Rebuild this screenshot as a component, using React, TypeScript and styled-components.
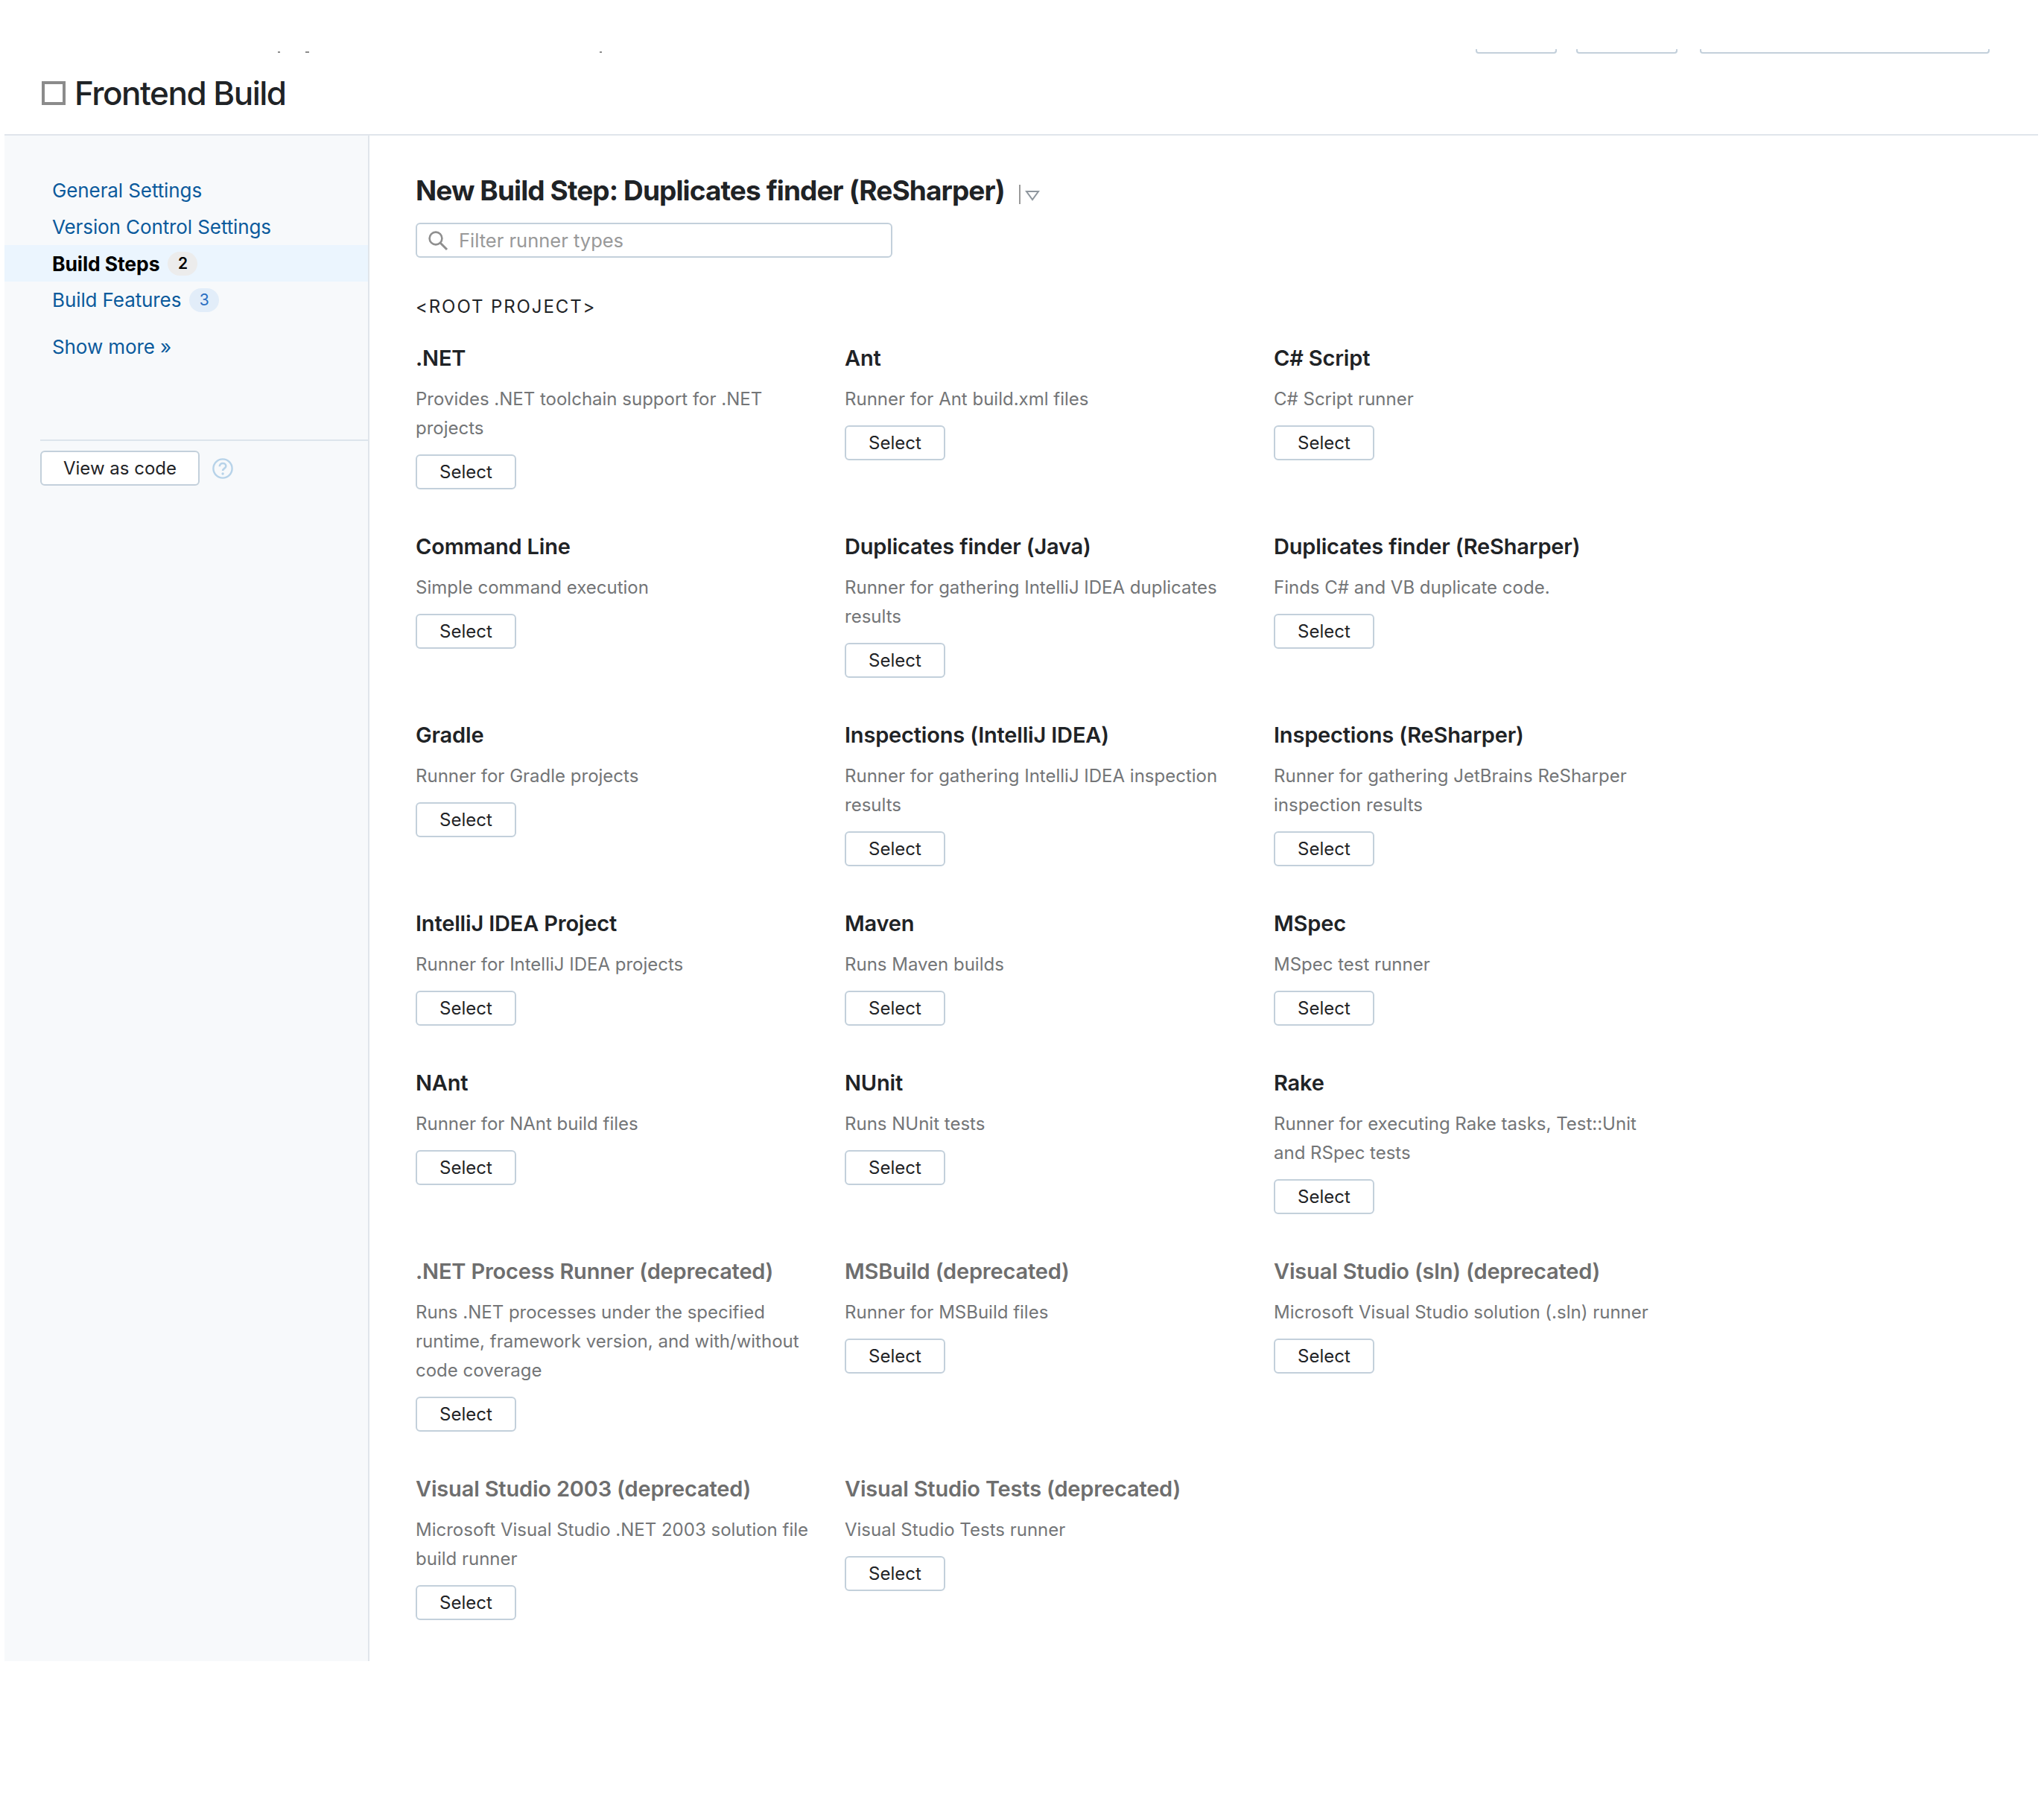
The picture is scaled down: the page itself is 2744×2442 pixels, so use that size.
import styled, { createGlobalStyle } from "styled-components";

const GlobalStyle = createGlobalStyle`
  html, body {
    margin: 0;
    background: #fff;
  }
  body {
    font-family: Inter, "Liberation Sans", sans-serif;
    color: #1f2326;
  }
  * {
    box-sizing: border-box;
  }
`;

const Page = styled.div`
  margin: 0 8px 0 6px;
`;

const Toolbar = styled.div`
  display: flex;
  align-items: flex-end;
  height: 72px;
  padding-right: 65px;
  overflow: hidden;
`;

const Crumbs = styled.div`
  display: flex;
  align-items: flex-end;
  gap: 34px;
  margin-left: 367px;
  padding-bottom: 1px;
`;

const Speck = styled.i<{ $w: number; $gap?: number }>`
  display: block;
  width: ${(p) => p.$w}px;
  height: 2px;
  margin-left: ${(p) => p.$gap ?? 0}px;
  background: #8c8c8c;
`;

const ToolbarActions = styled.div`
  display: flex;
  align-items: flex-end;
  margin-left: auto;
`;

const ClippedEdge = styled.div<{ $w: number; $gap?: number }>`
  width: ${(p) => p.$w}px;
  height: 6px;
  margin-left: ${(p) => p.$gap ?? 0}px;
  border: 2px solid #c3d0db;
  border-top: 0;
  border-radius: 0 0 4px 4px;
`;

const Header = styled.header`
  display: flex;
  align-items: center;
  gap: 12px;
  height: 110px;
  padding: 0 0 2px 50px;
  border-bottom: 2px solid #e0e5eb;
`;

const ProjectMark = styled.span`
  width: 32px;
  height: 32px;
  border: 4px solid #8b8b8b;
`;

const ProjectName = styled.h1`
  margin: 0;
  font-size: 44px;
  line-height: 56px;
  font-weight: 500;
  letter-spacing: -1.5px;
  color: #1f2326;
`;

const Body = styled.div`
  display: flex;
`;

const Sidebar = styled.aside`
  flex: 0 0 490px;
  padding-top: 49px;
  background: #f7f9fb;
  border-right: 2px solid #e0e5eb;
`;

const NavItem = styled.div<{ $active?: boolean }>`
  display: flex;
  align-items: center;
  height: 49px;
  padding-left: 64px;
  font-size: ${(p) => (p.$active ? 26.5 : 26)}px;
  font-weight: ${(p) => (p.$active ? 700 : 400)};
  letter-spacing: -0.1px;
  color: ${(p) => (p.$active ? "#000" : "#0b5a9c")};
  background: ${(p) => (p.$active ? "#ebf5fe" : "transparent")};
`;

const ShowMore = styled(NavItem)`
  margin-top: 14px;
`;

const Badge = styled.span<{ $active?: boolean }>`
  display: inline-flex;
  align-items: center;
  justify-content: center;
  width: 40px;
  height: 32px;
  margin-left: 11px;
  border-radius: 16px;
  font-size: 21px;
  font-weight: ${(p) => (p.$active ? 600 : 400)};
  color: ${(p) => (p.$active ? "#000" : "#2a6fc2")};
  background: ${(p) => (p.$active ? "#ececec" : "#e2edf9")};
`;

const SideFooter = styled.div`
  display: flex;
  align-items: center;
  gap: 17px;
  margin: 100px 0 0 48px;
  padding-top: 13px;
  border-top: 2px solid #dde5ec;
`;

const Button = styled.button<{ $w: number }>`
  width: ${(p) => p.$w}px;
  height: 47px;
  padding: 0;
  font-family: inherit;
  font-size: 24px;
  color: #1f2326;
  background: #fff;
  border: 2px solid #c3d0db;
  border-radius: 6px;
`;

const Main = styled.main`
  flex: 1;
  padding: 49px 0 55px 62px;
`;

const StepTitle = styled.div`
  display: flex;
  align-items: center;
`;

const StepHeading = styled.h2`
  margin: 0;
  font-size: 37px;
  line-height: 50px;
  font-weight: 700;
  letter-spacing: -0.9px;
  color: #1f2326;
`;

const MenuToggle = styled.svg`
  margin: 10px 0 0 19px;
`;

const Filter = styled.label`
  display: flex;
  align-items: center;
  gap: 14px;
  width: 640px;
  height: 47px;
  margin-top: 18px;
  padding-left: 14px;
  font-size: 25.5px;
  color: #999;
  background: #fff;
  border: 2px solid #c3d0db;
  border-radius: 6px;
`;

const Group = styled.div`
  margin-top: 51px;
  font-size: 24px;
  line-height: 30px;
  letter-spacing: 1.9px;
  color: #1f2326;
`;

const Runners = styled.div`
  display: grid;
  grid-template-columns: repeat(3, 576px);
  row-gap: 57px;
  margin-top: 34px;
`;

const Runner = styled.section`
  padding-right: 45px;
`;

const RunnerName = styled.h3<{ $deprecated?: boolean }>`
  margin: 0;
  font-size: 29px;
  line-height: 40px;
  font-weight: 600;
  letter-spacing: -0.18px;
  white-space: nowrap;
  color: ${(p) => (p.$deprecated ? "#6e6e6e" : "#1f2326")};
`;

const RunnerText = styled.p`
  margin: 15px 0 16px;
  font-size: 24px;
  line-height: 39px;
  color: #737577;
`;

const runners = [
  { name: ".NET", text: "Provides .NET toolchain support for .NET projects" },
  { name: "Ant", text: "Runner for Ant build.xml files" },
  { name: "C# Script", text: "C# Script runner" },
  { name: "Command Line", text: "Simple command execution" },
  { name: "Duplicates finder (Java)", text: "Runner for gathering IntelliJ IDEA duplicates results" },
  { name: "Duplicates finder (ReSharper)", text: "Finds C# and VB duplicate code." },
  { name: "Gradle", text: "Runner for Gradle projects" },
  { name: "Inspections (IntelliJ IDEA)", text: "Runner for gathering IntelliJ IDEA inspection results" },
  { name: "Inspections (ReSharper)", text: "Runner for gathering JetBrains ReSharper inspection results" },
  { name: "IntelliJ IDEA Project", text: "Runner for IntelliJ IDEA projects" },
  { name: "Maven", text: "Runs Maven builds" },
  { name: "MSpec", text: "MSpec test runner" },
  { name: "NAnt", text: "Runner for NAnt build files" },
  { name: "NUnit", text: "Runs NUnit tests" },
  { name: "Rake", text: "Runner for executing Rake tasks, Test::Unit and RSpec tests" },
  {
    name: ".NET Process Runner (deprecated)",
    text: "Runs .NET processes under the specified runtime, framework version, and with/without code coverage",
    deprecated: true,
  },
  { name: "MSBuild (deprecated)", text: "Runner for MSBuild files", deprecated: true },
  { name: "Visual Studio (sln) (deprecated)", text: "Microsoft Visual Studio solution (.sln) runner", deprecated: true },
  {
    name: "Visual Studio 2003 (deprecated)",
    text: "Microsoft Visual Studio .NET 2003 solution file build runner",
    deprecated: true,
  },
  { name: "Visual Studio Tests (deprecated)", text: "Visual Studio Tests runner", deprecated: true },
];

function SearchIcon() {
  return (
    <svg width="28" height="28" viewBox="0 0 28 28" fill="none" stroke="#8f8f8f" strokeWidth="2.6">
      <circle cx="11" cy="11" r="8.4" />
      <path d="M17 17l9 9" strokeWidth="3" />
    </svg>
  );
}

function HelpIcon() {
  return (
    <svg width="28" height="28" viewBox="0 0 28 28" fill="none" stroke="#b7d3e9" strokeWidth="2.4">
      <circle cx="14" cy="14" r="12.6" />
      <path d="M9.8 11.2c0-2.6 1.9-4.2 4.3-4.2s4.2 1.5 4.2 3.7c0 3.2-4.2 3.2-4.2 6.3" strokeWidth="2.6" />
      <circle cx="14.1" cy="21" r="1.7" fill="#b7d3e9" stroke="none" />
    </svg>
  );
}

export default function App() {
  return (
    <Page>
      <GlobalStyle />
      <Toolbar>
        <Crumbs>
          <Speck $w={3} />
          <Speck $w={5} />
          <Speck $w={3} $gap={356} />
        </Crumbs>
        <ToolbarActions>
          <ClippedEdge $w={109} />
          <ClippedEdge $w={136} $gap={26} />
          <ClippedEdge $w={389} $gap={30} />
        </ToolbarActions>
      </Toolbar>
      <Header>
        <ProjectMark />
        <ProjectName>Frontend Build</ProjectName>
      </Header>
      <Body>
        <Sidebar>
          <NavItem>General Settings</NavItem>
          <NavItem>Version Control Settings</NavItem>
          <NavItem $active>
            Build Steps
            <Badge $active>2</Badge>
          </NavItem>
          <NavItem>
            Build Features
            <Badge>3</Badge>
          </NavItem>
          <ShowMore>Show more »</ShowMore>
          <SideFooter>
            <Button $w={214}>View as code</Button>
            <HelpIcon />
          </SideFooter>
        </Sidebar>
        <Main>
          <StepTitle>
            <StepHeading>New Build Step: Duplicates finder (ReSharper)</StepHeading>
            <MenuToggle width="28" height="28" viewBox="0 0 28 28" fill="none">
              <path d="M1 1v26" stroke="#9a9a9a" strokeWidth="2" />
              <path d="M10 10h16l-8 11z" stroke="#8f979e" strokeWidth="2" />
            </MenuToggle>
          </StepTitle>
          <Filter>
            <SearchIcon />
            Filter runner types
          </Filter>
          <Group>&lt;ROOT PROJECT&gt;</Group>
          <Runners>
            {runners.map((r) => (
              <Runner key={r.name}>
                <RunnerName $deprecated={r.deprecated}>{r.name}</RunnerName>
                <RunnerText>{r.text}</RunnerText>
                <Button $w={135}>Select</Button>
              </Runner>
            ))}
          </Runners>
        </Main>
      </Body>
    </Page>
  );
}
